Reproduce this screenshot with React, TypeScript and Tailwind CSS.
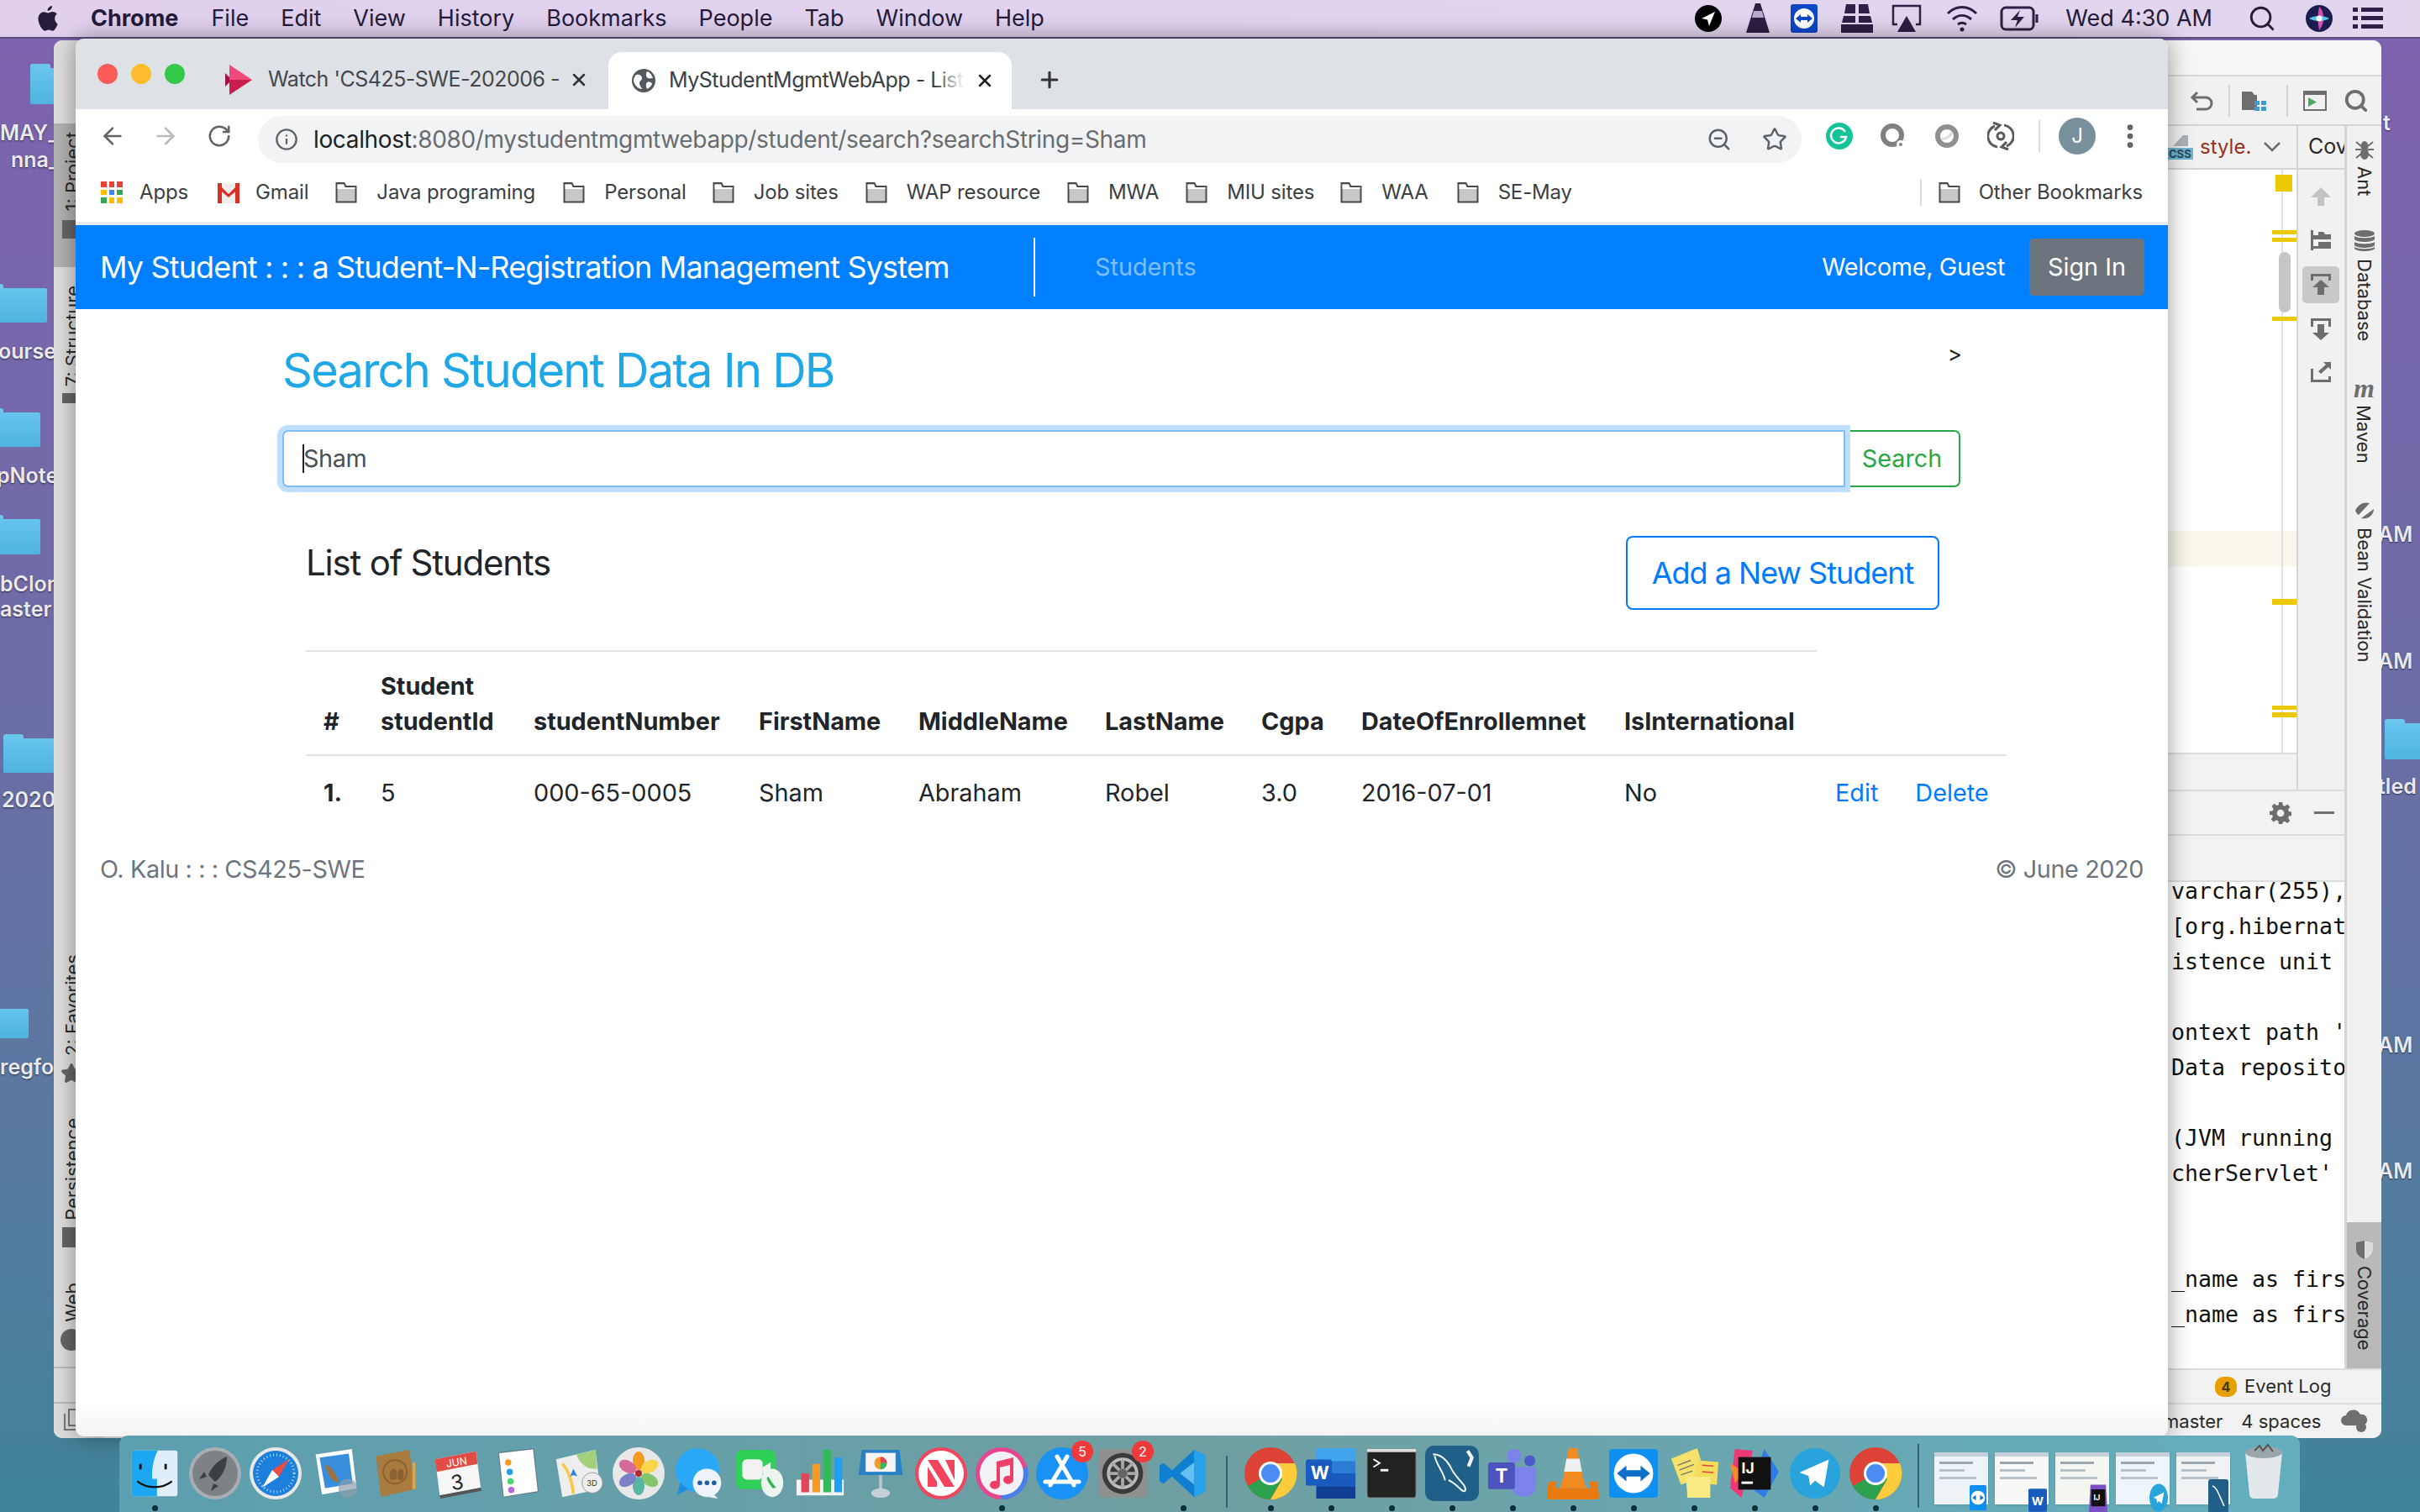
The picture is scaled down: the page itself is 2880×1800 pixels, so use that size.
import type { ReactNode } from "react";
import { ArrowLeft, ArrowRight, Info, MoreVertical, Plus, RotateCw, Search, Star, X, ZoomOut } from "lucide-react";

const menuItems = ["File", "Edit", "View", "History", "Bookmarks", "People", "Tab", "Window", "Help"];

const bookmarks = [
  { name: "Java programing", ml: "ml-[32px]" },
  { name: "Personal", ml: "ml-[33px]" },
  { name: "Job sites", ml: "ml-[31px]" },
  { name: "WAP resource", ml: "ml-[32px]" },
  { name: "MWA", ml: "ml-[32px]" },
  { name: "MIU sites", ml: "ml-[32px]" },
  { name: "WAA", ml: "ml-[31px]" },
  { name: "SE-May", ml: "ml-[34px]" },
];

const headers = ["studentNumber", "FirstName", "MiddleName", "LastName", "Cgpa", "DateOfEnrollemnet", "IsInternational"];
const row = ["000-65-0005", "Sham", "Abraham", "Robel", "3.0", "2016-07-01", "No"];

const consoleLines = ["varchar(255),", "[org.hibernat", "istence unit", "", "ontext path '", "Data reposito", "", "(JVM running", "cherServlet'", "", "", "_name as firs", "_name as firs"];

// Desktop labels peeking out from behind the windows
const desktopLabels = [
  { text: "MAY_1", cls: "left-0 top-[144px]" },
  { text: "nna_", cls: "left-[13px] top-[176px]" },
  { text: "ourse", cls: "left-[-2px] top-[404px]" },
  { text: "pNote", cls: "left-[-4px] top-[552px]" },
  { text: "bClon", cls: "left-0 top-[681px]" },
  { text: "aster", cls: "left-0 top-[711px]" },
  { text: "2020", cls: "left-[2px] top-[938px]" },
  { text: "regfor", cls: "left-0 top-[1256px]" },
  { text: "t", cls: "left-[2836px] top-[132px]" },
  { text: "AM", cls: "left-[2830px] top-[622px]" },
  { text: "AM", cls: "left-[2830px] top-[773px]" },
  { text: "tled", cls: "left-[2830px] top-[922px]" },
  { text: "AM", cls: "left-[2830px] top-[1230px]" },
  { text: "AM", cls: "left-[2830px] top-[1380px]" },
];

const desktopFolders = [
  "left-[36px] top-[76px] w-[40px] h-[48px]",
  "left-[-20px] top-[338px] w-[76px] h-[46px]",
  "left-[-20px] top-[486px] w-[68px] h-[46px]",
  "left-[-20px] top-[613px] w-[68px] h-[47px]",
  "left-[4px] top-[874px] w-[70px] h-[46px]",
  "left-[-30px] top-[1196px] w-[64px] h-[40px]",
  "left-[2838px] top-[856px] w-[60px] h-[48px]",
];

function DesktopFolder({ cls }: { cls: string }) {
  return (
    <div className={`absolute ${cls}`}>
      <div className="absolute left-0 top-0 h-[10px] w-[24px] rounded-t-[3px] bg-[#6cc6ee]" />
      <div className="absolute inset-x-0 bottom-0 top-[5px] rounded-[2px] bg-gradient-to-b from-[#66c4ee] to-[#4fb4e0]" />
    </div>
  );
}

function BookmarkFolder() {
  return (
    <svg width="26" height="26" viewBox="0 0 26 26" className="shrink-0">
      <path d="M1.5 24.5V2h9l2 4h12v18.5z" fill="#c8c8c8" stroke="#4a4a4a" strokeWidth="2" />
      <rect x="2.5" y="4" width="8" height="3" fill="#fff" />
      <rect x="2.5" y="7" width="21" height="2" fill="#fff" />
    </svg>
  );
}

function TrafficLights() {
  return (
    <div className="flex gap-[16px]">
      <span className="h-[24px] w-[24px] rounded-full bg-[#fc5b57]" />
      <span className="h-[24px] w-[24px] rounded-full bg-[#fdbc2e]" />
      <span className="h-[24px] w-[24px] rounded-full bg-[#33c748]" />
    </div>
  );
}

function MenuBar() {
  return (
    <header className="flex h-[46px] shrink-0 items-center border-b-2 border-[#5d4f7c] bg-gradient-to-r from-[#e0d0ee] to-[#e2d6ef] pl-[44px] pr-[44px] text-[27px] text-[#251b3a]">
      <svg width="26" height="34" viewBox="0 0 26 32" fill="#251b3a">
        <path d="M18 1c.3 3-2.500 6-5.400 5.800C12.300 4 15 1.200 18 1zM24.500 23c-1.300 3-3.300 7.600-6 7.700-1.700 0-2.500-1.100-4.500-1.100s-2.900 1.100-4.500 1.100C6.500 30.800 1.500 22.500 1.500 16.500c0-5.300 3.500-8.300 6.800-8.300 1.900 0 3.700 1.300 4.900 1.300s3.100-1.500 5.400-1.400c1.300.1 3.700.5 5.200 2.700-3.800 2.500-3.300 8.900.7 11.700z" />
      </svg>
      <span className="ml-[38px] font-bold">Chrome</span>
      <nav className="ml-[39px] flex gap-[38px]">
        {menuItems.map((m) => (
          <span key={m}>{m}</span>
        ))}
      </nav>
      <div className="ml-auto flex items-center">
        <svg width="34" height="34" viewBox="0 0 34 34" className="mr-[26px]">
          <circle cx="17" cy="17" r="16" fill="#000" />
          <path d="M25 9 9 17l7 1.500L18 26z" fill="#fff" />
        </svg>
        <svg width="32" height="38" viewBox="0 0 32 38" className="mr-[23px]">
          <path d="M13 1h6l11 35H2z" fill="#2d1f45" />
          <path d="M11 10h10l2 8H9z" fill="#b9a9cd" />
        </svg>
        <svg width="32" height="34" viewBox="0 0 32 34" className="mr-[26px]">
          <rect width="32" height="34" rx="3" fill="#0e46c8" />
          <circle cx="16" cy="17" r="12" fill="#fff" />
          <path d="M6 17l6-5v3h8v-3l6 5-6 5v-3h-8v3z" fill="#0e46c8" />
        </svg>
        <svg width="42" height="34" viewBox="0 0 42 34" fill="#2d1f45" className="mr-[20px]">
          <path d="M8 0h11v11H6zM23 0h11l2 11H23zM5 14h14v8H3zM23 14h14l2 8H23zM2 24h38v10H2z" />
        </svg>
        <svg width="36" height="34" viewBox="0 0 36 34" className="mr-[28px]">
          <path d="M7 24H2V2h32v22h-5" fill="none" stroke="#2d1f45" strokeWidth="2.500" />
          <path d="M18 14l11 19H7z" fill="#2d1f45" />
        </svg>
        <svg width="40" height="34" viewBox="0 0 40 34" fill="none" stroke="#2d1f45" strokeWidth="3" className="mr-[25px]">
          <path d="M3 11c10-10 24-10 34 0M9 18c7-6 15-6 22 0M15 24c3-2 7-2 10 0" />
          <circle cx="20" cy="30" r="2.500" fill="#2d1f45" stroke="none" />
        </svg>
        <svg width="46" height="30" viewBox="0 0 46 30" fill="none" stroke="#2d1f45" strokeWidth="3" className="mr-[32px]">
          <rect x="2" y="2" width="38" height="26" rx="5" />
          <path d="M44 10v10" />
          <path d="M24 5 13 17h8l-3 9 11-13h-8z" fill="#2d1f45" stroke="none" />
        </svg>
        <span>Wed 4:30 AM</span>
        <Search className="ml-[42px] h-[34px] w-[34px] text-[#251b3a]" strokeWidth={2} />
        <svg width="34" height="34" viewBox="0 0 34 34" className="ml-[34px]">
          <circle cx="17" cy="17" r="16" fill="#1c1d4f" />
          <path d="M17 3c7 6 7 20 0 28-2-9-2-19 0-28z" fill="#d84bb0" />
          <path d="M5 17c6-4 18-4 24 0-6 4-18 4-24 0z" fill="#57c4ea" />
          <circle cx="17" cy="17" r="3.500" fill="#fff" />
        </svg>
        <svg width="36" height="28" viewBox="0 0 36 28" fill="#2d1f45" className="ml-[23px]">
          <path d="M0 1h6v5H0zM10 1h26v5H10zM0 11h6v5H0zM10 11h26v5H10zM0 21h6v5H0zM10 21h26v5H10z" />
        </svg>
      </div>
    </header>
  );
}

function StripLabel({ icon, label, cls }: { icon: ReactNode; label: string; cls: string }) {
  return (
    <div className={`flex flex-col items-end ${cls}`}>
      <span className="rotate-180 text-[22px] leading-[24px] text-[#2a2a2a] [writing-mode:vertical-rl]">{label}</span>
      <div className="mt-[8px]">{icon}</div>
    </div>
  );
}

function RightStripLabel({ icon, label, cls }: { icon: ReactNode; label: string; cls: string }) {
  return (
    <div className={`flex flex-col items-center ${cls}`}>
      {icon}
      <span className="mt-[8px] text-[22px] leading-[24px] text-[#2a2a2a] [writing-mode:vertical-rl]">{label}</span>
    </div>
  );
}

function LeftStrip() {
  return (
    <div className="flex h-full w-[60px] shrink-0 flex-col bg-[#dedede]">
      <div className="mt-[99px] flex h-[171px] flex-col items-start bg-[#b2b2b2] pl-[10px] pt-[10px]">
        <span className="rotate-180 text-[22px] leading-[24px] text-[#2a2a2a] [writing-mode:vertical-rl]">1: Project</span>
        <span className="mt-[10px] h-[22px] w-[26px] bg-[#666]" />
      </div>
      <div className="pl-[10px]">
        <StripLabel cls="mt-[22px] w-[24px]" label="7: Structure" icon={<span className="block h-[12px] w-[24px] bg-[#666]" />} />
        <StripLabel cls="mt-[656px] w-[24px]" label="2: Favorites" icon={<Star className="h-[26px] w-[26px] text-[#666]" fill="#666" />} />
        <StripLabel cls="mt-[40px] w-[24px]" label="Persistence" icon={<span className="block h-[24px] w-[24px] bg-[#666]" />} />
        <StripLabel cls="mt-[42px] w-[24px]" label="Web" icon={<span className="block h-[26px] w-[26px] rounded-full bg-[#666]" />} />
      </div>
      <div className="mt-auto h-[44px] border-y-2 border-[#bdbdbd]" />
      <div className="h-[41px] pl-[12px] pt-[6px]">
        <svg width="22" height="26" viewBox="0 0 22 26" fill="none" stroke="#777" strokeWidth="2">
          <path d="M1 6v19h16M6 1h16v19H6z" />
        </svg>
      </div>
    </div>
  );
}

function EditorGutter() {
  // Error stripe marks sit at line positions of the open file
  return (
    <>
      <div className="absolute left-[135px] top-0 h-full w-[2px] bg-[#e2e2e2]" />
      <div className="absolute left-[128px] top-[6px] h-[20px] w-[20px] bg-[#ebc800]" />
      <div className="absolute left-[124px] top-[72px] h-[5px] w-[29px] bg-[#ebc800]" />
      <div className="absolute left-[124px] top-[81px] h-[5px] w-[29px] bg-[#ebc800]" />
      <div className="absolute left-[132px] top-[98px] h-[72px] w-[14px] rounded-full bg-[#c6c6c6]" />
      <div className="absolute left-[124px] top-[175px] h-[5px] w-[29px] bg-[#ebc800]" />
      <div className="absolute left-[124px] top-[511px] h-[7px] w-[29px] bg-[#ebc800]" />
      <div className="absolute left-[124px] top-[638px] h-[5px] w-[29px] bg-[#ebc800]" />
      <div className="absolute left-[124px] top-[646px] h-[6px] w-[29px] bg-[#ebc800]" />
    </>
  );
}

function IdeRight() {
  return (
    <div className="flex h-full w-[254px] shrink-0 flex-col text-[#2a2a2a]">
      <div className="h-[43px] shrink-0 border-b-2 border-[#d8d8d8] bg-[#f6f6f6]" />
      <div className="relative flex h-[59px] shrink-0 items-center border-b-2 border-[#d4d4d4] bg-[#f1f1f1]">
        <svg width="28" height="28" viewBox="0 0 28 28" fill="none" stroke="#6e6e6e" strokeWidth="3" className="ml-[26px]">
          <path d="M9 4 3 10l6 6M3 10h16a6 6 0 0 1 0 14H8" />
        </svg>
        <span className="ml-[18px] h-[38px] w-[2px] bg-[#d4d4d4]" />
        <svg width="30" height="24" viewBox="0 0 30 24" className="ml-[14px]">
          <path d="M0 1h12l3 4h3v18H0z" fill="#6e6e6e" />
          <path d="M15 12h6v5h-6zM23 12h6v5h-6zM15 19h6v5h-6zM23 19h6v5h-6z" fill="#3d9bd8" />
        </svg>
        <span className="ml-[23px] h-[38px] w-[2px] bg-[#d4d4d4]" />
        <svg width="28" height="24" viewBox="0 0 28 24" className="ml-[18px]">
          <rect x="1" y="1" width="26" height="22" fill="none" stroke="#6e6e6e" strokeWidth="2" />
          <rect x="1" y="1" width="26" height="4" fill="#6e6e6e" />
          <path d="M6 8v11l10-5.500z" fill="#4fa761" />
        </svg>
        <Search className="ml-[20px] h-[30px] w-[30px] text-[#6e6e6e]" strokeWidth={3} />
      </div>

      <div className="flex min-h-0 flex-1">
        <div className="flex min-w-0 flex-1 flex-col">
          <div className="flex h-[790px] shrink-0">
            <div className="flex w-[153px] shrink-0 flex-col">
              <div className="flex h-[52px] shrink-0 items-center overflow-hidden border-b-2 border-[#d4d4d4] bg-[#f1f1f1]">
                <svg width="30" height="34" viewBox="0 0 30 34" className="ml-0 shrink-0">
                  <path d="M6 16 18 3h6v13z" fill="#a7b1b8" />
                  <rect x="0" y="18" width="30" height="14" fill="#6fb5d2" />
                  <text x="1" y="30" fontSize="13" fontWeight="700" fill="#2b4a58">CSS</text>
                </svg>
                <span className="ml-[8px] w-[58px] shrink-0 text-[24px] text-[#96321c]">style.</span>
                <svg width="20" height="14" viewBox="0 0 20 14" fill="none" stroke="#6e6e6e" strokeWidth="2.500" className="ml-[18px] shrink-0">
                  <path d="m1 2 9 9 9-9" />
                </svg>
              </div>
              <div className="relative min-h-0 flex-1 bg-white">
                <div className="absolute inset-x-0 top-[430px] h-[42px] bg-[#faf8ec]" />
                <EditorGutter />
              </div>
              <div className="h-[44px] shrink-0 border-t-2 border-[#dcdcdc] bg-[#f2f2f2]" />
            </div>
            <div className="flex flex-1 flex-col border-l-2 border-[#d4d4d4] bg-[#f1f1f1]">
              <div className="flex h-[52px] shrink-0 items-center border-b-2 border-[#d4d4d4] pl-[12px] text-[25px]">Cov</div>
              <div className="flex flex-col items-center pr-[4px] pt-[20px]">
                <svg width="24" height="24" viewBox="0 0 24 24" fill="#c4c4c4"><path d="M12 1 24 13h-8v10H8V13H0z" /></svg>
                <svg width="24" height="24" viewBox="0 0 24 24" fill="#6e6e6e" className="mt-[28px]"><path d="M0 0h3v24H0zM3 6h6V2h6l2 3h7v6H3zM3 19h6v-5h15v8H3z" /></svg>
                <div className="mt-[19px] flex h-[44px] w-[44px] items-center justify-center rounded-[5px] bg-[#c9c9c9]">
                  <svg width="24" height="26" viewBox="0 0 24 26" fill="#6e6e6e"><path d="M0 0h24v8h-3V3H3v5H0zM12 7l10 9h-6v9H8v-9H2z" /></svg>
                </div>
                <svg width="24" height="26" viewBox="0 0 24 26" fill="#6e6e6e" className="mt-[18px]"><path d="M0 0h24v10h-3V3H3v7H0zM8 7h8v10h6L12 26 2 17h6z" /></svg>
                <svg width="24" height="24" viewBox="0 0 24 24" fill="#6e6e6e" className="mt-[26px]"><path d="M0 8h3v13h18v-4h3v7H0zM15 0h9v9l-3-3-9 8-3-3 9-8z" /></svg>
              </div>
            </div>
          </div>
          <div className="flex h-[55px] shrink-0 items-center justify-end border-y-2 border-[#dcdcdc] bg-[#f2f2f2] pr-[12px]">
            <svg width="26" height="26" viewBox="0 0 24 24" fill="#6e6e6e" className="mr-[27px]">
              <path fillRule="evenodd" d="M10 0h4l.6 3.500 2 .8 3-2 2.800 2.800-2 3 .8 2 3.500.6v4l-3.500.6-.8 2 2 3-2.800 2.800-3-2-2 .8L14 24h-4l-.6-3.500-2-.8-3 2-2.800-2.800 2-3-.8-2L0 14v-4l3.500-.6.8-2-2-3 2.800-2.800 3 2 2-.8zM12 8a4 4 0 1 0 0 8 4 4 0 0 0 0-8z" />
            </svg>
            <span className="h-[3px] w-[24px] bg-[#6e6e6e]" />
          </div>
          <div className="h-[55px] shrink-0 border-b-2 border-[#dcdcdc] bg-[#f2f2f2]" />
          <div className="min-h-0 flex-1 overflow-hidden bg-white pl-[4px]">
            <pre className="mt-[-10px] text-[26.6px] leading-[42px] text-[#111] font-[family-name:'DejaVu_Sans_Mono',monospace]">
              {consoleLines.join("\n")}
            </pre>
          </div>
        </div>
        <div className="flex w-[44px] shrink-0 flex-col items-center border-l-[3px] border-[#d4d4d4] bg-[#f1f1f1]">
          <RightStripLabel
            cls="pt-[16px]"
            label="Ant"
            icon={
              <svg width="22" height="24" viewBox="0 0 22 24" fill="none" stroke="#6e6e6e" strokeWidth="2">
                <ellipse cx="11" cy="8" rx="3.500" ry="5" fill="#6e6e6e" />
                <ellipse cx="11" cy="17" rx="4" ry="6" fill="#6e6e6e" />
                <path d="M1 3l6 5M21 3l-6 5M0 12h7M22 12h-7M1 22l6-5M21 22l-6-5" />
              </svg>
            }
          />
          <RightStripLabel
            cls="mt-[41px]"
            label="Database"
            icon={
              <svg width="24" height="26" viewBox="0 0 24 26" fill="#6e6e6e">
                <ellipse cx="12" cy="4" rx="12" ry="4" />
                <path d="M0 7c3 3 21 3 24 0v4c-3 4-21 4-24 0zM0 14c3 3 21 3 24 0v4c-3 4-21 4-24 0zM0 20c3 3 21 3 24 0v2c-3 4-21 4-24 0z" />
              </svg>
            }
          />
          <RightStripLabel
            cls="mt-[43px]"
            label="Maven"
            icon={<span className="text-[32px] font-bold italic leading-[24px] text-[#6e6e6e] font-[family-name:'Liberation_Serif',serif]">m</span>}
          />
          <RightStripLabel
            cls="mt-[45px]"
            label="Bean Validation"
            icon={
              <svg width="24" height="24" viewBox="0 0 24 24" fill="#6e6e6e">
                <path d="M1 12C4 4 12 1 18 3L5 17c-2-1-3-3-4-5zM8 21l15-11c0 6-6 13-15 11z" />
              </svg>
            }
          />
          <div className="mt-auto flex h-[174px] w-full flex-col items-center bg-[#b9b9b9] pt-[22px]">
            <svg width="20" height="22" viewBox="0 0 20 22">
              <path d="M0 2l10-2 10 2v9c0 5-5 9-10 11C5 20 0 16 0 11z" fill="#6e6e6e" />
              <path d="M10 0l10 2v9c0 5-5 9-10 11z" fill="#dcdcdc" />
            </svg>
            <span className="mt-[8px] text-[22px] leading-[24px] text-[#2a2a2a] [writing-mode:vertical-rl]">Coverage</span>
          </div>
        </div>
      </div>

      <div className="flex h-[43px] shrink-0 items-center border-y-2 border-[#dcdcdc] bg-[#f2f2f2] pl-[56px] text-[22px]">
        <span className="flex h-[24px] w-[26px] items-center justify-center rounded-[10px] bg-[#e8a000] text-[16px] font-bold text-[#443a10]">4</span>
        <span className="ml-[9px]">Event Log</span>
      </div>
      <div className="flex h-[40px] shrink-0 items-center rounded-b-[10px] bg-[#f2f2f2] text-[22px]">
        <span className="ml-[-6px] whitespace-nowrap">master</span>
        <span className="ml-[22px] whitespace-nowrap">4 spaces</span>
        <svg width="32" height="30" viewBox="0 0 32 30" className="ml-[24px]">
          <path d="M6 20a6 6 0 0 1 0-12 9 9 0 0 1 17-1 6.500 6.500 0 0 1 3 13z" fill="#6e6e6e" />
          <circle cx="24" cy="22" r="6" fill="#6e6e6e" />
        </svg>
      </div>
    </div>
  );
}

function IdeWindow() {
  return (
    <div className="absolute left-[64px] top-[2px] flex h-[1664px] w-[2770px] overflow-hidden rounded-[10px] bg-[#f1f1f1]">
      <LeftStrip />
      <div className="min-w-0 flex-1" />
      <IdeRight />
    </div>
  );
}

function ChromeTabs() {
  return (
    <div className="flex h-[84px] shrink-0 items-center rounded-t-[10px] bg-[#dee1e6] pl-[26px]">
      <TrafficLights />
      <div className="ml-[48px] mt-[14px] flex w-[456px] shrink-0 items-center text-[25px] tracking-[-0.5px] text-[#45474a]">
        <svg width="32" height="36" viewBox="0 0 32 36">
          <path d="M0 10l8 8-8 8z" fill="#a3123f" />
          <path d="M5 0l27 18H5z" fill="#ef4a7a" />
          <path d="M5 36l27-18H5z" fill="#c81e4e" />
        </svg>
        <span className="ml-[19px] w-[346px] whitespace-nowrap">Watch 'CS425-SWE-202006 -</span>
        <X className="ml-[12px] h-[24px] w-[24px] shrink-0 text-[#333]" strokeWidth={2.5} />
      </div>
      <div className="flex h-[68px] w-[480px] shrink-0 items-center self-end rounded-t-[16px] bg-white pl-[28px] text-[25px] tracking-[-0.5px] text-[#3c4043]">
        <svg width="28" height="28" viewBox="0 0 28 28" className="shrink-0">
          <circle cx="14" cy="14" r="14" fill="#53585e" />
          <path d="M5 7c4-1 7 1 7 4s-3 3-3 6 2 4 3 7c-4 0-9-4-10-10 0-2 1-5 3-7zM18 3c3 1 6 4 7 8-3 0-4 1-6 0s-3-4-1-8zM18 16c3-1 6 0 6 2-1 3-4 5-6 6-1-3-2-6 0-8z" fill="#fff" />
        </svg>
        <div className="relative ml-[16px] w-[352px] overflow-hidden whitespace-nowrap">
          MyStudentMgmtWebApp - List
          <div className="absolute inset-y-0 right-0 w-[36px] bg-gradient-to-r from-transparent to-white" />
        </div>
        <X className="ml-[12px] h-[24px] w-[24px] shrink-0 text-[#222]" strokeWidth={2.5} />
      </div>
      <Plus className="ml-[30px] mt-[14px] h-[30px] w-[30px] text-[#333]" strokeWidth={2.5} />
    </div>
  );
}

function ChromeToolbar() {
  return (
    <div className="flex h-[64px] shrink-0 items-center bg-white">
      <ArrowLeft className="ml-[28px] h-[32px] w-[32px] text-[#5f6368]" strokeWidth={2} />
      <ArrowRight className="ml-[31px] h-[32px] w-[32px] text-[#b8babd]" strokeWidth={2} />
      <RotateCw className="ml-[33px] h-[30px] w-[30px] text-[#5f6368]" strokeWidth={2} />
      <div className="ml-[31px] mt-[8px] flex h-[56px] w-[1837px] items-center self-start rounded-full bg-[#f1f3f4] pl-[20px] pr-[17px]">
        <Info className="h-[28px] w-[28px] text-[#5f6368]" strokeWidth={2} />
        <span className="ml-[18px] text-[28px] tracking-[-0.35px] text-[#6a6d70]">
          <span className="text-[#202124]">localhost</span>:8080/mystudentmgmtwebapp/student/search?searchString=Sham
        </span>
        <ZoomOut className="ml-auto h-[30px] w-[30px] text-[#5f6368]" strokeWidth={2} />
        <Star className="ml-[36px] h-[30px] w-[30px] text-[#5f6368]" strokeWidth={2} />
      </div>
      <svg width="32" height="32" viewBox="0 0 32 32" className="ml-[29px]">
        <circle cx="16" cy="16" r="16" fill="#15c39a" />
        <path d="M23 11a9 9 0 1 0 1 6h-7" fill="none" stroke="#fff" strokeWidth="2.500" />
      </svg>
      <svg width="32" height="32" viewBox="0 0 32 32" fill="none" className="ml-[32px]">
        <circle cx="15" cy="15" r="11" stroke="#808080" strokeWidth="6" />
        <circle cx="25" cy="26" r="5" fill="#fff" />
        <circle cx="25" cy="26" r="2" fill="#808080" />
      </svg>
      <svg width="30" height="32" viewBox="0 0 30 32" fill="none" className="ml-[33px]">
        <circle cx="15" cy="16" r="11" stroke="#8f8f8f" strokeWidth="6" />
        <path d="M9 19c4 1 10-2 12-8" stroke="#ddd" strokeWidth="3" />
      </svg>
      <svg width="32" height="34" viewBox="0 0 32 34" fill="none" stroke="#5a5a5a" strokeWidth="3" className="ml-[33px]">
        <path d="M9 5A13 13 0 0 0 12 30M23 29A13 13 0 0 0 20 4" />
        <circle cx="16" cy="17" r="4" />
        <path d="M7 1l8 3-6 6M25 33l-8-3 6-6" />
      </svg>
      <span className="ml-[29px] h-[38px] w-[2px] bg-[#dadce0]" />
      <span className="ml-[22px] flex h-[44px] w-[44px] items-center justify-center rounded-full bg-[#78909c] text-[24px] text-white">J</span>
      <MoreVertical className="ml-[23px] h-[36px] w-[36px] text-[#5f6368]" strokeWidth={2.5} />
    </div>
  );
}

function AppsGrid() {
  const colors = ["#ea4335", "#ea4335", "#ea4335", "#fbbc04", "#4285f4", "#34a853", "#34a853", "#fbbc04", "#fbbc04"];
  return (
    <div className="grid h-[26px] w-[26px] grid-cols-3 gap-[3px]">
      {colors.map((c, i) => (
        <span key={i} style={{ backgroundColor: c }} />
      ))}
    </div>
  );
}

function BookmarksBar() {
  return (
    <div className="flex h-[74px] shrink-0 items-center border-b-[4px] border-[#e8eaed] bg-white pl-[30px] text-[24px] tracking-[-0.15px] text-[#3c4043]">
      <AppsGrid />
      <span className="ml-[20px]">Apps</span>
      <svg width="28" height="28" viewBox="0 0 28 28" className="ml-[34px]">
        <path d="M1 3h26v24H1z" fill="#eee" />
        <path d="M1 3l13 13L27 3v6L14 20 1 9z" fill="#d93025" />
        <path d="M1 3h5v24H1zM22 3h5v24h-5z" fill="#d93025" />
      </svg>
      <span className="ml-[18px]">Gmail</span>
      {bookmarks.map((b) => (
        <div key={b.name} className={`flex items-center ${b.ml}`}>
          <BookmarkFolder />
          <span className="ml-[23px] whitespace-nowrap">{b.name}</span>
        </div>
      ))}
      <span className="ml-auto h-[32px] w-[2px] bg-[#dadce0]" />
      <div className="ml-[20px] mr-[30px] flex items-center">
        <BookmarkFolder />
        <span className="ml-[22px]">Other Bookmarks</span>
      </div>
    </div>
  );
}

function StudentPage() {
  return (
    <div className="flex shrink-0 flex-col bg-white text-[28.8px] text-[#212529]">
      <nav className="flex h-[100px] shrink-0 items-center bg-[#0080ff] pl-[29px] pr-[28px] text-white">
        <span className="w-[1111px] shrink-0 whitespace-nowrap text-[36px] tracking-[-0.85px]">My Student : : : a Student-N-Registration Management System</span>
        <span className="h-[70px] w-[2px] bg-white" />
        <span className="ml-[71px] text-white/50">Students</span>
        <span className="ml-auto tracking-[-0.35px]">Welcome, Guest</span>
        <button className="ml-[29px] flex h-[68px] w-[137px] items-center justify-center rounded-[5px] bg-[#6c757d] text-white">Sign In</button>
      </nav>

      <main className="flex flex-col pl-[246px]">
        <div className="flex h-[144px] w-[1999px] shrink-0 items-start justify-between pt-[36px]">
          <h1 className="text-[56px] leading-[75px] tracking-[-1.8px] text-[#1fa7e6]">Search Student Data In DB</h1>
          <span className="text-[26px] leading-[36px]">&gt;</span>
        </div>

        <form className="flex h-[68px] w-[1997px] shrink-0">
          <div className="relative z-10 flex h-full w-[1860px] items-center rounded-l-[7px] border-2 border-[#80bdff] bg-white pl-[22px] shadow-[0_0_0_6px_#bfdfff]">
            <span className="h-[34px] w-[2px] bg-[#222]" />
            <span className="ml-[-1px] tracking-[-0.4px] text-[#495057]">Sham</span>
          </div>
          <button type="button" className="ml-[-2px] flex h-full flex-1 items-center justify-center rounded-r-[7px] border-2 border-[#28a745] text-[#28a745]">Search</button>
        </form>

        <section className="w-[2024px] pl-[28px]">
          <div className="flex items-start justify-between pr-[52px] pt-[58px]">
            <h2 className="mt-[6px] text-[42px] leading-[52px] tracking-[-1.2px]">List of Students</h2>
            <button className="flex h-[88px] w-[373px] items-center justify-center rounded-[8px] border-2 border-[#007bff] text-[36px] tracking-[-1px] text-[#007bff]">Add a New Student</button>
          </div>
          <hr className="mt-[48px] w-[1798px] border-t-2 border-[#e2e3e5]" />
          <table className="mt-[20px] w-[2024px] table-fixed border-collapse text-left">
            <colgroup>
              <col className="w-[68px]" />
              <col className="w-[181px]" />
              <col className="w-[268px]" />
              <col className="w-[190px]" />
              <col className="w-[222px]" />
              <col className="w-[186px]" />
              <col className="w-[119px]" />
              <col className="w-[313px]" />
              <col className="w-[251px]" />
              <col className="w-[226px]" />
            </colgroup>
            <thead>
              <tr className="border-b-2 border-[#e2e3e5] align-bottom font-bold">
                <th className="pb-[18px] pl-[21px] leading-[42px]">#</th>
                <th className="pb-[18px] pl-[21px] leading-[42px]">Student<br />studentId</th>
                {headers.map((h) => (
                  <th key={h} className="pb-[18px] pl-[22px] leading-[42px]">{h}</th>
                ))}
                <th />
              </tr>
            </thead>
            <tbody>
              <tr>
                <td className="h-[88px] pl-[21px] font-bold">1.</td>
                <td className="pl-[21px]">5</td>
                {row.map((c) => (
                  <td key={c} className="pl-[22px]">{c}</td>
                ))}
                <td className="pl-[22px] text-[#007bff]">
                  <span>Edit</span>
                  <span className="ml-[44px]">Delete</span>
                </td>
              </tr>
            </tbody>
          </table>
        </section>
      </main>
    </div>
  );
}

function ChromeWindow() {
  return (
    <div className="absolute left-[90px] top-0 flex h-[1664px] w-[2490px] flex-col overflow-hidden rounded-[10px] bg-white shadow-[0_0_28px_rgba(0,0,0,0.4)]">
      <ChromeTabs />
      <ChromeToolbar />
      <BookmarksBar />
      <div className="flex flex-1 flex-col">
        <StudentPage />
        <footer className="flex items-center justify-between px-[29px] pt-[26px] text-[28.8px] tracking-[-0.4px] text-[#6c757d]">
          <span>O. Kalu : : : CS425-SWE</span>
          <span>© June 2020</span>
        </footer>
        <div className="mt-auto h-[40px] shrink-0 bg-gradient-to-b from-white to-[#f3f3f3]" />
      </div>
    </div>
  );
}

function ChromeLogo() {
  return (
    <svg width="64" height="64" viewBox="0 0 64 64">
      <circle cx="32" cy="32" r="31" fill="#dd4437" />
      <path d="M32 32 5 47A31 31 0 0 0 32 63l14-24z" fill="#2da14f" />
      <path d="M32 20h29a31 31 0 0 1-29 43l14-24z" fill="#fccc3c" />
      <circle cx="32" cy="32" r="14" fill="#fff" />
      <circle cx="32" cy="32" r="11" fill="#4a8bf5" />
    </svg>
  );
}

const dockLeft: ReactNode[] = [
  <svg key="finder" viewBox="0 0 64 64" width="60" height="60">
    <rect x="3" y="3" width="58" height="58" rx="3" fill="#dfeefa" />
    <path d="M3 6a3 3 0 0 1 3-3h30c-6 12-8 26-7 36h6v22H6a3 3 0 0 1-3-3z" fill="#1ba7f2" />
    <path d="M14 20v7M46 20v7" stroke="#111" strokeWidth="3" />
    <path d="M10 42c12 10 32 10 44 0" fill="none" stroke="#111" strokeWidth="2.500" />
  </svg>,
  <svg key="launch" viewBox="0 0 64 64" width="64" height="64">
    <circle cx="32" cy="32" r="31" fill="#a9adb1" />
    <circle cx="32" cy="32" r="27" fill="#7d8286" />
    <path d="M46 12c0 14-6 24-14 30l-8-8c4-10 12-18 22-22zM22 36l-9 3 6-9zM30 44l-3 9 9-6z" fill="#3c4044" />
  </svg>,
  <svg key="safari" viewBox="0 0 64 64" width="64" height="64">
    <circle cx="32" cy="32" r="31" fill="#e8e8e8" />
    <circle cx="32" cy="32" r="27" fill="#1c7fdb" />
    <circle cx="32" cy="32" r="22" fill="none" stroke="#bcdcf5" strokeWidth="3" strokeDasharray="1 3" />
    <path d="M48 15 36 36 28 28z" fill="#ef4b3f" />
    <path d="M16 49 28 28l8 8z" fill="#fff" />
  </svg>,
  <svg key="mail" viewBox="0 0 64 64" width="60" height="64">
    <path d="M6 8 52 1l6 50-44 8z" fill="#fff" />
    <path d="M11 12 48 7l5 38-35 6z" fill="#3a8fdc" />
    <path d="M18 20c8 4 14 12 18 24-8-2-14-6-18-24z" fill="#a0713a" />
    <circle cx="47" cy="51" r="12" fill="#8aa0ad" opacity="0.7" />
  </svg>,
  <svg key="contacts" viewBox="0 0 64 64" width="60" height="64">
    <path d="M6 10 48 2l8 50-44 10z" fill="#a97b3f" />
    <circle cx="30" cy="30" r="15" fill="none" stroke="#8a6130" strokeWidth="2" />
    <path d="M24 40c-2-8 0-14 5-14s4 12 1 14zM34 40c-2-8 0-14 4-14s4 12 1 14z" fill="#8a6130" />
    <path d="M52 18h4v34h-4z" fill="#e8a23a" />
  </svg>,
  <svg key="calendar" viewBox="0 0 64 64" width="60" height="64">
    <path d="M4 14 56 4l6 46-52 10z" fill="#f6f6f6" />
    <path d="M4 14 56 4l2 16-52 10z" fill="#e34c45" />
    <text x="18" y="24" fontSize="13" fill="#fff" transform="rotate(-8 20 20)" fontFamily="Inter, sans-serif">JUN</text>
    <text x="24" y="53" fontSize="26" fill="#222" transform="rotate(-8 28 44)" fontFamily="Inter, sans-serif">3</text>
    <path d="M10 60 62 50l1 4-52 10z" fill="#555" />
  </svg>,
  <svg key="reminders" viewBox="0 0 64 64" width="60" height="64">
    <path d="M8 6 52 1l6 54-44 7z" fill="#fff" stroke="#222" strokeWidth="0.500" />
    <circle cx="20" cy="18" r="4" fill="#f59a23" />
    <circle cx="22" cy="30" r="4" fill="#1ea1f2" />
    <circle cx="23" cy="42" r="4" fill="#4ad66d" />
    <circle cx="24" cy="53" r="4" fill="#b965dc" />
  </svg>,
  <svg key="maps" viewBox="0 0 64 64" width="60" height="64">
    <path d="M4 14 54 2l6 50-48 10z" fill="#eee" />
    <path d="M30 8 54 2l2 24c-12 2-22-6-26-18z" fill="#a3d07d" />
    <path d="M12 20c8 8 12 20 14 38" fill="none" stroke="#f7c948" strokeWidth="4" />
    <path d="M22 36l4-10 5 10-5-2z" fill="#2c7be5" />
    <circle cx="50" cy="44" r="13" fill="#eee" stroke="#999" />
    <text x="43" y="48" fontSize="10" fill="#333" fontFamily="Inter, sans-serif">3D</text>
  </svg>,
  <svg key="photos" viewBox="0 0 64 64" width="64" height="64">
    <circle cx="32" cy="32" r="31" fill="#e8e8e8" />
    <ellipse cx="32" cy="17" rx="7" ry="11" fill="#f59a23" />
    <ellipse cx="45" cy="24" rx="7" ry="11" fill="#f8d84a" transform="rotate(60 45 24)" />
    <ellipse cx="45" cy="40" rx="7" ry="11" fill="#85c46c" transform="rotate(120 45 40)" />
    <ellipse cx="32" cy="47" rx="7" ry="11" fill="#5ab4a4" />
    <ellipse cx="19" cy="40" rx="7" ry="11" fill="#7b81c9" transform="rotate(60 19 40)" />
    <ellipse cx="19" cy="24" rx="7" ry="11" fill="#d46a9a" transform="rotate(120 19 24)" />
    <circle cx="32" cy="32" r="4" fill="#b02a2a" />
  </svg>,
  <svg key="messages" viewBox="0 0 64 64" width="60" height="60">
    <ellipse cx="30" cy="28" rx="28" ry="28" fill="#29a8f8" />
    <path d="M8 44 4 60l14-8z" fill="#1c8fe0" />
    <ellipse cx="42" cy="44" rx="18" ry="18" fill="#eef4fa" />
    <path d="M50 58l6 6-12-2z" fill="#eef4fa" />
    <circle cx="33" cy="44" r="3" fill="#1c5ea8" />
    <circle cx="42" cy="44" r="3" fill="#1c5ea8" />
    <circle cx="51" cy="44" r="3" fill="#1c5ea8" />
  </svg>,
  <svg key="facetime" viewBox="0 0 64 64" width="60" height="60">
    <rect x="2" y="2" width="50" height="50" rx="8" fill="#2fcf58" />
    <rect x="10" y="14" width="26" height="26" rx="6" fill="#f2f2f2" />
    <path d="M36 24l10-6v20l-10-6z" fill="#f2f2f2" />
    <ellipse cx="48" cy="44" rx="14" ry="18" fill="#eef4ee" />
    <path d="M43 36c4 6 6 10 10 14l-4 1c-3-3-7-9-8-13z" fill="#2fb850" />
  </svg>,
  <svg key="numbers" viewBox="0 0 64 64" width="60" height="64">
    <path d="M2 40h60v20H2z" fill="#f4f4f4" />
    <rect x="8" y="32" width="10" height="24" fill="#e0455a" />
    <rect x="22" y="20" width="10" height="36" fill="#f59a23" />
    <rect x="36" y="2" width="10" height="54" fill="#33b85c" />
    <rect x="50" y="12" width="10" height="44" fill="#1ea1f2" />
  </svg>,
  <svg key="keynote" viewBox="0 0 64 64" width="60" height="64">
    <path d="M8 2h48l4 32H4z" fill="#2a80c4" />
    <rect x="13" y="6" width="38" height="24" fill="#f4f4f4" />
    <circle cx="32" cy="19" r="8" fill="#f59a23" />
    <path d="M32 19V11a8 8 0 0 1 8 8z" fill="#e0455a" />
    <path d="M32 19h8a8 8 0 0 1-8 8z" fill="#33b85c" />
    <rect x="30" y="34" width="4" height="22" fill="#b8c4cc" />
    <ellipse cx="32" cy="57" rx="12" ry="6" fill="#c6d0d6" />
  </svg>,
  <svg key="news" viewBox="0 0 64 64" width="64" height="64">
    <circle cx="32" cy="32" r="31" fill="#f2445c" />
    <circle cx="32" cy="32" r="27" fill="#fff" />
    <path d="M16 16h12l20 32H36zM16 24l11 18v6H16zM37 16h11v24z" fill="#f2445c" />
  </svg>,
  <svg key="music" viewBox="0 0 64 64" width="64" height="64">
    <circle cx="32" cy="32" r="31" fill="#e8458f" />
    <path d="M32 63A31 31 0 0 0 62 22L55 32A24 24 0 0 1 32 57z" fill="#4a7ee8" />
    <circle cx="32" cy="32" r="26" fill="#f2f2f6" />
    <path d="M26 18 46 13v27a6 5 0 1 1-4-5V22l-12 3v21a6 5 0 1 1-4-5z" fill="#ee3f66" />
  </svg>,
  <svg key="appstore" viewBox="0 0 64 64" width="64" height="64">
    <circle cx="32" cy="32" r="31" fill="#1a92f5" />
    <path d="M26 12 46 46M38 12 18 46M12 42h40" stroke="#fff" strokeWidth="5" strokeLinecap="round" />
  </svg>,
  <svg key="prefs" viewBox="0 0 64 64" width="60" height="60">
    <rect x="1" y="1" width="62" height="62" rx="5" fill="#8f8f8f" />
    <circle cx="32" cy="32" r="26" fill="#3a3a3a" />
    <circle cx="32" cy="32" r="18" fill="none" stroke="#bbb" strokeWidth="4" />
    <path d="M32 14v36M14 32h36M19 19l26 26M45 19 19 45" stroke="#aaa" strokeWidth="4" />
    <circle cx="32" cy="32" r="6" fill="#666" />
  </svg>,
  <svg key="vscode" viewBox="0 0 64 64" width="60" height="64">
    <path d="M46 2 60 9v46l-14 7L18 36 7 45l-5-3V22l5-3 11 9z" fill="#0f7fd0" />
    <path d="M46 18 28 32l18 14z" fill="#65bff0" />
    <path d="M46 2 60 9v46l-14 7z" fill="#28a1ee" />
  </svg>,
];

const dockRight: ReactNode[] = [
  <ChromeLogo key="chrome" />,
  <svg key="word" viewBox="0 0 64 64" width="62" height="62">
    <rect x="14" y="1" width="48" height="62" rx="3" fill="#2b7cd3" />
    <rect x="14" y="1" width="48" height="16" fill="#41a5ee" />
    <rect x="14" y="32" width="48" height="16" fill="#185abd" />
    <rect x="14" y="48" width="48" height="15" fill="#103f91" />
    <rect x="1" y="15" width="32" height="32" rx="3" fill="#185abd" />
    <text x="7" y="39" fontSize="22" fontWeight="700" fill="#fff" fontFamily="Inter, sans-serif">W</text>
  </svg>,
  <svg key="terminal" viewBox="0 0 64 64" width="60" height="62">
    <rect x="1" y="1" width="62" height="62" rx="3" fill="#222" stroke="#888" />
    <rect x="1" y="1" width="62" height="4" fill="#ddd" />
    <path d="M9 14l8 5-8 5" fill="none" stroke="#fff" strokeWidth="2" />
    <path d="M18 28h10" stroke="#fff" strokeWidth="3" />
  </svg>,
  <svg key="mysql" viewBox="0 0 64 64" width="66" height="66">
    <rect x="1" y="0" width="62" height="64" rx="10" fill="#1f5f88" />
    <path d="M10 10c8 0 14 4 20 14 3 8 8 12 16 22 3 5 1 8-2 6-6-5-10-10-16-12M24 40c-2-10-10-18-12-28" fill="none" stroke="#f2f4f6" strokeWidth="2" />
    <path d="M50 6l5 8-4 10" fill="none" stroke="#f2f4f6" strokeWidth="4" />
  </svg>,
  <svg key="teams" viewBox="0 0 64 64" width="60" height="62">
    <circle cx="34" cy="10" r="9" fill="#7b83eb" />
    <circle cx="54" cy="16" r="7" fill="#5059c9" />
    <path d="M30 24h32v22c0 10-6 16-15 16s-17-6-17-16z" fill="#7b83eb" />
    <rect x="1" y="18" width="34" height="34" rx="3" fill="#4b53bc" />
    <text x="10" y="44" fontSize="24" fontWeight="700" fill="#fff" fontFamily="Inter, sans-serif">T</text>
  </svg>,
  <svg key="vlc" viewBox="0 0 64 64" width="62" height="64">
    <path d="M27 1h10l7 36H20z" fill="#f48b1f" />
    <path d="M24 14h16l3 16H21z" fill="#efefef" />
    <path d="M2 42h10l-2 8h44l-2-8h10l2 18a4 4 0 0 1-4 4H4a4 4 0 0 1-4-4z" fill="#e87a10" />
    <path d="M20 37h24l4 13H16z" fill="#f48b1f" />
  </svg>,
  <svg key="teamviewer" viewBox="0 0 64 64" width="60" height="62">
    <rect x="1" y="1" width="62" height="62" rx="4" fill="#0f8ff0" />
    <circle cx="32" cy="32" r="25" fill="#fff" />
    <path d="M11 32l12-10v6h18v-6l12 10-12 10v-6H23v6z" fill="#0f6fc8" />
  </svg>,
  <svg key="stickies" viewBox="0 0 64 64" width="62" height="64">
    <path d="M4 14 36 1l10 34-30 11z" fill="#f6e26a" />
    <path d="M36 16l26 2-2 28-26-2z" fill="#f4dc5c" />
    <path d="M22 36h30v26H24z" fill="#f9ea86" />
    <path d="M12 22l16-6M14 28l18-7M16 34l14-5" stroke="#777" strokeWidth="1.500" />
    <path d="M42 22l14 1M42 30l14 1" stroke="#d9463c" strokeWidth="1.500" />
  </svg>,
  <svg key="intellij" viewBox="0 0 64 64" width="62" height="64">
    <path d="M8 2 30 4 16 62 2 50z" fill="#ed3a76" />
    <path d="M44 2 62 30 44 62 28 50z" fill="#2f7be8" />
    <path d="M2 20 20 30 8 44z" fill="#f58a2a" />
    <rect x="12" y="12" width="40" height="40" fill="#111" />
    <text x="16" y="32" fontSize="18" fontWeight="700" fill="#fff" fontFamily="Inter, sans-serif">IJ</text>
    <rect x="16" y="42" width="14" height="3" fill="#fff" />
  </svg>,
  <svg key="telegram" viewBox="0 0 64 64" width="62" height="62">
    <circle cx="32" cy="32" r="31" fill="#29a3dc" />
    <path d="M13 31 49 15l-6 34-11-8-6 6-2-12z" fill="#fff" />
  </svg>,
  <ChromeLogo key="chrome2" />,
];

const thumbnails: { bg: string; badge: ReactNode }[] = [
  {
    bg: "bg-[#eef3f8]",
    badge: (
      <svg viewBox="0 0 24 36" width="20" height="36">
        <rect width="24" height="36" rx="2" fill="#0f8ff0" />
        <circle cx="12" cy="18" r="10" fill="#fff" />
        <path d="M4 18l5-4v8zM20 18l-5-4v8z" fill="#0f6fc8" />
      </svg>
    ),
  },
  {
    bg: "bg-[#f8f8f8]",
    badge: (
      <svg viewBox="0 0 24 30" width="22" height="30">
        <rect width="24" height="30" rx="2" fill="#185abd" />
        <text x="4" y="21" fontSize="15" fontWeight="700" fill="#fff" fontFamily="Inter, sans-serif">W</text>
      </svg>
    ),
  },
  {
    bg: "bg-[#f4f6f2]",
    badge: (
      <svg viewBox="0 0 24 36" width="22" height="34">
        <path d="M2 0h20l2 36H0z" fill="#7b4fc4" />
        <rect x="3" y="6" width="18" height="22" fill="#111" />
        <text x="6" y="20" fontSize="10" fontWeight="700" fill="#fff" fontFamily="Inter, sans-serif">IJ</text>
      </svg>
    ),
  },
  {
    bg: "bg-[#eef6fb]",
    badge: (
      <svg viewBox="0 0 24 36" width="22" height="36">
        <ellipse cx="12" cy="18" rx="12" ry="18" fill="#29a3dc" />
        <path d="M5 18 19 11l-3 15-4-4-2 3-1-6z" fill="#fff" />
      </svg>
    ),
  },
  {
    bg: "bg-[#f0f2f4]",
    badge: (
      <svg viewBox="0 0 24 40" width="24" height="40">
        <rect width="24" height="40" rx="3" fill="#1f5f88" />
        <path d="M5 8c6 2 8 12 14 24" fill="none" stroke="#fff" strokeWidth="1.500" />
      </svg>
    ),
  },
];

function Dot({ on }: { on: boolean }) {
  return <span className={`mt-[3px] h-[7px] w-[7px] rounded-full ${on ? "bg-[#062f3a]" : "bg-transparent"}`} />;
}

function DockCell({ children, on, badge }: { children: ReactNode; on: boolean; badge?: string }) {
  return (
    <div className="relative flex w-[72px] shrink-0 flex-col items-center">
      <div className="flex h-[70px] items-center">{children}</div>
      <Dot on={on} />
      {badge && (
        <span className="absolute right-[-1px] top-[-4px] flex h-[26px] w-[26px] items-center justify-center rounded-full bg-[#f03a3a] text-[16px] text-white">{badge}</span>
      )}
    </div>
  );
}

function Dock() {
  const running = [0, 14, 17];
  return (
    <div className="absolute left-[142px] top-[1663px] flex h-[91px] w-[2595px] items-start rounded-t-[10px] bg-gradient-to-r from-[#5c9fb0] via-[#6f9fa2] to-[#62aebf] pl-[6px] pt-[10px]">
      {dockLeft.map((icon, i) => (
        <DockCell key={i} on={running.includes(i)} badge={i === 15 ? "5" : i === 16 ? "2" : undefined}>
          {icon}
        </DockCell>
      ))}
      <span className="mx-[15px] mt-[14px] h-[62px] w-[2px] bg-[#34606c]" />
      {dockRight.map((icon, i) => (
        <DockCell key={i} on>
          {icon}
        </DockCell>
      ))}
      <span className="mx-[14px] h-[76px] w-[2px] bg-[#34606c]" />
      {thumbnails.map((t, i) => (
        <div key={i} className="w-[72px] shrink-0 pt-[10px]">
          <div className={`relative mx-auto h-[62px] w-[64px] shadow-sm ${t.bg}`}>
            <div className="h-[5px] bg-[#c5d0d8]" />
            <div className="ml-[6px] mt-[6px] h-[3px] w-[40px] bg-[#9aa7b0]" />
            <div className="ml-[6px] mt-[6px] h-[3px] w-[30px] bg-[#b7c2ca]" />
            <div className="ml-[6px] mt-[6px] h-[3px] w-[44px] bg-[#b7c2ca]" />
            <div className="absolute bottom-[-10px] right-[2px]">{t.badge}</div>
          </div>
        </div>
      ))}
      <div className="w-[72px] shrink-0">
        <svg viewBox="0 0 50 66" width="50" height="66" className="mx-auto">
          <path d="M3 10h44l-5 50a5 5 0 0 1-5 5H13a5 5 0 0 1-5-5z" fill="#e3e8ea" />
          <ellipse cx="25" cy="10" rx="22" ry="7" fill="#9aa6aa" />
          <path d="M14 8l6-6 4 6 6-7 6 8" fill="none" stroke="#555" strokeWidth="2" />
        </svg>
      </div>
    </div>
  );
}

export default function App() {
  return (
    <div className="flex h-[1800px] w-[2880px] flex-col overflow-hidden bg-gradient-to-b from-[#7f62ae] via-[#6a6ea6] to-[#3f8499] font-[family-name:Inter,sans-serif]">
      <MenuBar />
      <div className="relative flex-1">
        <div className="absolute left-0 top-[-46px] h-[1800px] w-[2880px] overflow-hidden">
          {desktopFolders.map((f) => (
            <DesktopFolder key={f} cls={f} />
          ))}
          {desktopLabels.map((l) => (
            <span key={l.cls} className={`absolute whitespace-nowrap text-[25px] font-semibold leading-[28px] text-[#e9e9ef] [text-shadow:0_1px_2px_rgba(0,0,0,0.6)] ${l.cls}`}>
              {l.text}
            </span>
          ))}
        </div>
        <IdeWindow />
        <ChromeWindow />
        <Dock />
      </div>
    </div>
  );
}
